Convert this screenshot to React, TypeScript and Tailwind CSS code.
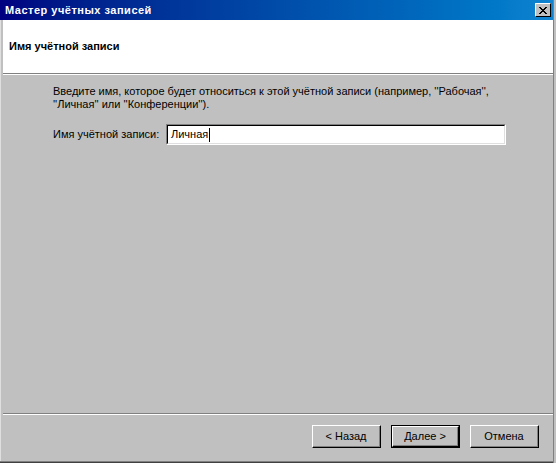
import React from "react";

const font = { fontFamily: '"Liberation Sans", Arial, sans-serif' };

function WinButton({ label, isDefault }: { label: string; isDefault?: boolean }) {
  const inner = (
    <div className="flex h-full w-full items-center justify-center border-t border-l border-t-white border-l-white border-r border-b border-r-black border-b-black">
      <div className="flex h-full w-full items-center justify-center border-r border-b border-r-[#808080] border-b-[#808080] text-[11px] text-black">
        {label}
      </div>
    </div>
  );
  if (isDefault) {
    return <div className="h-[23px] w-[69px] border border-black">{inner}</div>;
  }
  return <div className="h-[23px] w-[69px]">{inner}</div>;
}

export default function App() {
  return (
    <div className="flex h-[463px] w-[556px] bg-[#c0c0c0]" style={font}>
      <div className="flex w-[553px] flex-col">
        {/* title bar */}
        <div className="flex h-[20px] items-center justify-between bg-gradient-to-r from-[#000080] to-[#1084d0] pl-[5px] pr-[2px]">
          <span className="text-[11px] font-bold tracking-[0.5px] text-white">Мастер учётных записей</span>
          <div className="flex h-[14px] w-[16px] items-center justify-center border-t border-l border-t-white border-l-white border-r border-b border-r-black border-b-black bg-[#c0c0c0]">
            <svg width="8" height="7" viewBox="0 0 8 7" shapeRendering="crispEdges">
              <path d="M0 0h2v1H0zM6 0h2v1H6zM1 1h2v1H1zM5 1h2v1H5zM2 2h4v1H2zM3 3h2v1H3zM2 4h4v1H2zM1 5h2v1H1zM5 5h2v1H5zM0 6h2v1H0zM6 6h2v1H6z" fill="#000" />
            </svg>
          </div>
        </div>

        <div className="flex flex-1">
          {/* left frame */}
          <div className="w-[3px] border-l border-l-[#dfdfdf]" />

          <div className="flex flex-1 flex-col">
            {/* header */}
            <div className="h-[53px] bg-white pl-[6px] pt-[13px]">
              <span className="text-[11px] font-bold text-black">Имя учётной записи</span>
            </div>
            <div className="h-px bg-[#808080]" />
            <div className="h-px bg-white" />

            {/* body */}
            <div className="flex-1 pl-[50px] pt-[10px] text-[11px] leading-[13px] text-black">
              <p>
                Введите имя, которое будет относиться к этой учётной записи (например, ''Рабочая'',
                <br />
                ''Личная'' или ''Конференции'').
              </p>
              <div className="mt-[13px] flex items-center">
                <span className="w-[113px]">Имя учётной записи:</span>
                <div className="h-[21px] w-[340px] border-t border-l border-t-[#808080] border-l-[#808080] border-r border-b border-r-white border-b-white">
                  <div className="flex h-full items-center border-t border-l border-t-black border-l-black border-r border-b border-r-[#dfdfdf] border-b-[#dfdfdf] bg-white pl-[3px]">
                    <span>Личная</span>
                    <span className="ml-px h-[14px] w-px bg-black" />
                  </div>
                </div>
              </div>
            </div>

            <div className="h-px bg-[#808080]" />
            <div className="h-px bg-white" />

            {/* footer */}
            <div className="flex h-[46px] justify-end gap-[10px] pr-[14px] pt-[10px]">
              <WinButton label="< Назад" />
              <WinButton label="Далее >" isDefault />
              <WinButton label="Отмена" />
            </div>
          </div>
        </div>
        <div className="h-px bg-[#808080]" />
        <div className="h-px bg-[#404040]" />
      </div>

      {/* right frame */}
      <div className="w-[3px] border-l border-l-[#808080] bg-[#c0c0c0]" />
    </div>
  );
}
